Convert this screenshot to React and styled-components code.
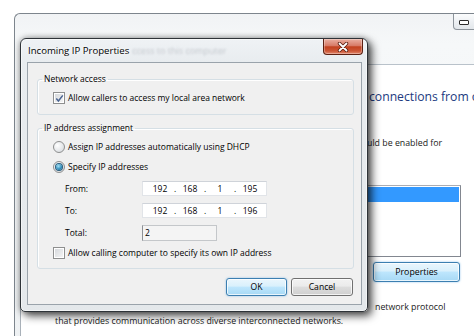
import React from 'react';
import styled, { createGlobalStyle } from 'styled-components';

const GlobalStyle = createGlobalStyle`
  html, body {
    margin: 0;
    padding: 0;
    background: #fff;
    overflow: hidden;
  }
  body {
    font-family: "Open Sans", "Noto Sans", sans-serif;
    font-size: 8.5px;
    color: #000;
  }
`;

const Desktop = styled.div`
  position: relative;
  width: 474px;
  height: 336px;
  overflow: hidden;
  background: #fff;
`;

/* ---------- window behind ---------- */

const BgWindow = styled.div`
  position: absolute;
  left: 14px;
  top: 13px;
  width: 520px;
  height: 340px;
  box-sizing: border-box;
  display: flex;
  flex-direction: column;
  border: 1px solid #7d858d;
  border-right: none;
  border-bottom: none;
  border-radius: 6px 0 0 0;
  background: linear-gradient(to bottom, #f1f3f5, #f6f8f9 30px, #eef1f3);
`;

const BgTitle = styled.div`
  height: 50px;
  display: flex;
  align-items: flex-start;
  padding-left: 438px;
`;

const MinButton = styled.div`
  width: 24px;
  height: 16px;
  box-sizing: border-box;
  border: 1px solid #8d949b;
  border-top: none;
  border-radius: 0 0 0 4px;
  background: linear-gradient(#fbfcfd, #eef1f4 50%, #e3e7eb);
  display: flex;
  align-items: center;
  justify-content: center;
  padding-right: 2px;
`;

const MinGlyph = styled.span`
  width: 8px;
  height: 3px;
  border: 1px solid #2c2c2c;
  border-radius: 1px;
  background: #fff;
  margin-top: 2px;
`;

const BgClient = styled.div`
  flex: 1;
  margin-left: 5px;
  border-left: 1px solid #a9b1b9;
  border-top: 1px solid #b9c2ca;
  background: #fff;
  padding: 23px 0 0 34px;
`;

const Line = styled.div`
  display: flex;
  white-space: nowrap;
  font-size: ${p => p.$size || 8.8}px;
  line-height: ${p => p.$lh || 14}px;
  color: ${p => p.$color || '#1a1a1a'};
  margin-top: ${p => p.$mt || 0}px;
`;

/* the start of these lines sits under the dialog */
const Spacer = styled.span`
  flex: 0 0 ${p => p.$w}px;
`;

const ListBox = styled.div`
  width: 406px;
  height: 72px;
  box-sizing: border-box;
  margin-top: 35px;
  border: 1px solid #828790;
  border-top-color: #abadb3;
  padding: 1px;
  background: #fff;
`;

const ListItem = styled.div`
  height: 15px;
  background: ${p => (p.$selected ? '#3399ff' : 'transparent')};
`;

const ButtonRow = styled.div`
  display: flex;
  justify-content: flex-end;
  gap: 4px;
  width: ${p => p.$w || 'auto'};
  margin-top: ${p => p.$mt || 0}px;
  padding-right: ${p => p.$pr || 0}px;
  box-sizing: border-box;
`;

const Button = styled.button`
  box-sizing: border-box;
  width: ${p => p.$w}px;
  height: ${p => p.$h || 18}px;
  padding: 0;
  font-family: inherit;
  font-size: ${p => p.$fs || 8.6}px;
  color: #000;
  border-radius: 3px;
  border: 1px solid ${p => (p.$blue ? '#3c7fb1' : '#707070')};
  background: ${p =>
    p.$blue
      ? 'linear-gradient(#eaf6fd 0%, #d9f0fc 45%, #bee6fd 50%, #a7d9f5 100%)'
      : 'linear-gradient(#f2f2f2 0%, #ebebeb 45%, #dddddd 50%, #cfcfcf 100%)'};
  box-shadow: inset 0 0 0 1px rgba(255, 255, 255, 0.75)
    ${p => (p.$blue ? ', 0 0 2px rgba(60, 150, 220, 0.6)' : '')};
`;

/* ---------- dialog ---------- */

const Dialog = styled.div`
  position: absolute;
  left: 20px;
  top: 38px;
  width: 348px;
  height: 274px;
  box-sizing: border-box;
  display: flex;
  flex-direction: column;
  border: 1px solid #2e3338;
  border-radius: 6px 6px 5px 5px;
  background: linear-gradient(to bottom, #eff2f5, #e8ecef 24px, #e4e8eb);
  box-shadow: 0 0 0 1px rgba(255, 255, 255, 0.5) inset, 4px 4px 9px rgba(0, 0, 0, 0.65),
    0 0 6px rgba(0, 0, 0, 0.35);
`;

const DialogTitle = styled.div`
  height: 23px;
  display: flex;
  align-items: flex-start;
  padding-left: 7px;
  padding-right: 4px;
`;

const TitleText = styled.span`
  font-size: 9.6px;
  line-height: 14px;
  padding-top: 5px;
  white-space: nowrap;
  text-shadow: 0 0 6px #fff, 0 0 3px #fff;
`;

const GhostText = styled.span`
  font-size: 9px;
  line-height: 14px;
  padding-top: 5px;
  margin-left: 3px;
  white-space: nowrap;
  color: rgba(40, 50, 70, 0.22);
  filter: blur(1.2px);
`;

const CloseButton = styled.div`
  width: 40px;
  height: 16px;
  margin-left: auto;
  box-sizing: border-box;
  border: 1px solid #5c2012;
  border-top: none;
  border-radius: 0 0 4px 4px;
  background: linear-gradient(#eab0a2 0%, #d77a66 45%, #c2421f 52%, #cc5636 80%, #e38b70 100%);
  box-shadow: inset 0 0 0 1px rgba(255, 255, 255, 0.3);
  display: flex;
  align-items: center;
  justify-content: center;
`;

const DialogClient = styled.div`
  flex: 1;
  margin: 0 5px 6px 6px;
  border: 1px solid #9aa3ab;
  background: #f0f0f0;
  padding: 9px 7px 0 9px;
  display: flex;
  flex-direction: column;
`;

const Group = styled.fieldset`
  margin: ${p => p.$mt || 0}px 0 0 0;
  padding: 0 0 ${p => p.$pb}px 15px;
  border: 1px solid #d5dfe5;
  border-radius: 3px;
  box-shadow: inset 1px 1px 0 #fff;
  min-width: 0;
`;

const Legend = styled.legend`
  margin-left: -11px;
  padding: 0 2px;
  line-height: 14px;
  color: #000;
`;

const OptionRow = styled.label`
  display: flex;
  align-items: center;
  gap: 3px;
  height: 14px;
  margin-top: ${p => p.$mt || 0}px;
  white-space: nowrap;
  line-height: 14px;
`;

const CheckBox = styled.span`
  box-sizing: border-box;
  width: 12px;
  height: 12px;
  flex: 0 0 12px;
  border: 1px solid #8e8f8f;
  background: linear-gradient(135deg, #d3d6da, #f7f7f7);
  box-shadow: inset 0 0 0 1px #fff;
  display: flex;
  align-items: center;
  justify-content: center;
`;

const Radio = styled.span`
  box-sizing: border-box;
  width: 12px;
  height: 12px;
  flex: 0 0 12px;
  border-radius: 50%;
  border: 1px solid #8e8f8f;
  background: radial-gradient(circle at 35% 35%, #ffffff, #dfe2e5 70%, #c9ccd0);
  display: flex;
  align-items: center;
  justify-content: center;
`;

const RadioDot = styled.span`
  width: 6px;
  height: 6px;
  border-radius: 50%;
  background: radial-gradient(circle at 40% 35%, #a6e3f7, #2e8ab8 60%, #1b5f86);
  box-shadow: 0 0 0 1px #2a5d7c;
`;

const RangeGrid = styled.div`
  display: grid;
  grid-template-columns: 77px auto;
  row-gap: 7px;
  align-items: center;
  margin: 7px 0 0 12px;
`;

const FieldLabel = styled.span`
  line-height: 14px;
`;

const IpBox = styled.div`
  box-sizing: border-box;
  width: 125px;
  height: 15px;
  display: flex;
  align-items: center;
  padding-left: 5px;
  background: #fff;
  border: 1px solid #e1e4e8;
  border-top-color: #cfd3d9;
`;

const Octet = styled.span`
  width: 24px;
  text-align: center;
  line-height: 13px;
`;

const Dot = styled.span`
  width: 6px;
  text-align: center;
  line-height: 13px;
`;

const TotalBox = styled.div`
  box-sizing: border-box;
  width: 75px;
  height: 16px;
  padding-left: 2px;
  line-height: 14px;
  background: #f4f4f4;
  border: 1px solid #c4c7ca;
  border-left-color: #8d9196;
`;

const Check = () => (
  <svg width="9" height="9" viewBox="0 0 9 9">
    <path d="M1.3 4.6 L3.4 7 L7.8 1.4" fill="none" stroke="#4a6491" strokeWidth="1.5" />
  </svg>
);

const CloseX = () => (
  <svg width="12" height="10" viewBox="0 0 12 10">
    <path d="M2.5 1.5 L9.5 8.5 M9.5 1.5 L2.5 8.5" stroke="#5a1d10" strokeWidth="3.4" strokeLinecap="round" />
    <path d="M2.5 1.5 L9.5 8.5 M9.5 1.5 L2.5 8.5" stroke="#fff" strokeWidth="1.8" strokeLinecap="round" />
  </svg>
);

const IpAddress = ({ parts }) => (
  <IpBox>
    {parts.map((p, i) => (
      <React.Fragment key={i}>
        {i > 0 && <Dot>.</Dot>}
        <Octet>{p}</Octet>
      </React.Fragment>
    ))}
  </IpBox>
);

export default function App() {
  return (
    <>
      <GlobalStyle />
      <Desktop>
        <BgWindow>
          <BgTitle>
            <MinButton>
              <MinGlyph />
            </MinButton>
          </BgTitle>
          <BgClient>
            <Line $size={12.2} $lh={18} $color="#223a80">
              <Spacer $w={314} />
              <span>connections from other kinds of computers</span>
            </Line>
            <Line $mt={30}>
              <Spacer $w={312} />
              <span>uld be enabled for</span>
            </Line>
            <ListBox>
              <ListItem $selected />
            </ListBox>
            <ButtonRow $w="406px" $mt={5} $pr={1}>
              <Button $w={87} $h={20} $fs={8.8} $blue>
                Properties
              </Button>
            </ButtonRow>
            <Line $mt={18}>
              <Spacer $w={320} />
              <span>network protocol</span>
            </Line>
            <Line>that provides communication across diverse interconnected networks.</Line>
          </BgClient>
        </BgWindow>

        <Dialog>
          <DialogTitle>
            <TitleText>Incoming IP Properties</TitleText>
            <GhostText>ccess to this computer</GhostText>
            <CloseButton>
              <CloseX />
            </CloseButton>
          </DialogTitle>
          <DialogClient>
            <Group $pb={9}>
              <Legend>Network access</Legend>
              <OptionRow $mt={5}>
                <CheckBox>
                  <Check />
                </CheckBox>
                Allow callers to access my local area network
              </OptionRow>
            </Group>

            <Group $mt={6} $pb={8}>
              <Legend>IP address assignment</Legend>
              <OptionRow $mt={5}>
                <Radio />
                Assign IP addresses automatically using DHCP
              </OptionRow>
              <OptionRow $mt={6}>
                <Radio>
                  <RadioDot />
                </Radio>
                Specify IP addresses
              </OptionRow>
              <RangeGrid>
                <FieldLabel>From:</FieldLabel>
                <IpAddress parts={['192', '168', '1', '195']} />
                <FieldLabel>To:</FieldLabel>
                <IpAddress parts={['192', '168', '1', '196']} />
                <FieldLabel>Total:</FieldLabel>
                <TotalBox>2</TotalBox>
              </RangeGrid>
              <OptionRow $mt={5}>
                <CheckBox />
                Allow calling computer to specify its own IP address
              </OptionRow>
            </Group>

            <ButtonRow $mt={9} $pr={1}>
              <Button $w={61} $blue>
                OK
              </Button>
              <Button $w={62}>Cancel</Button>
            </ButtonRow>
          </DialogClient>
        </Dialog>
      </Desktop>
    </>
  );
}
